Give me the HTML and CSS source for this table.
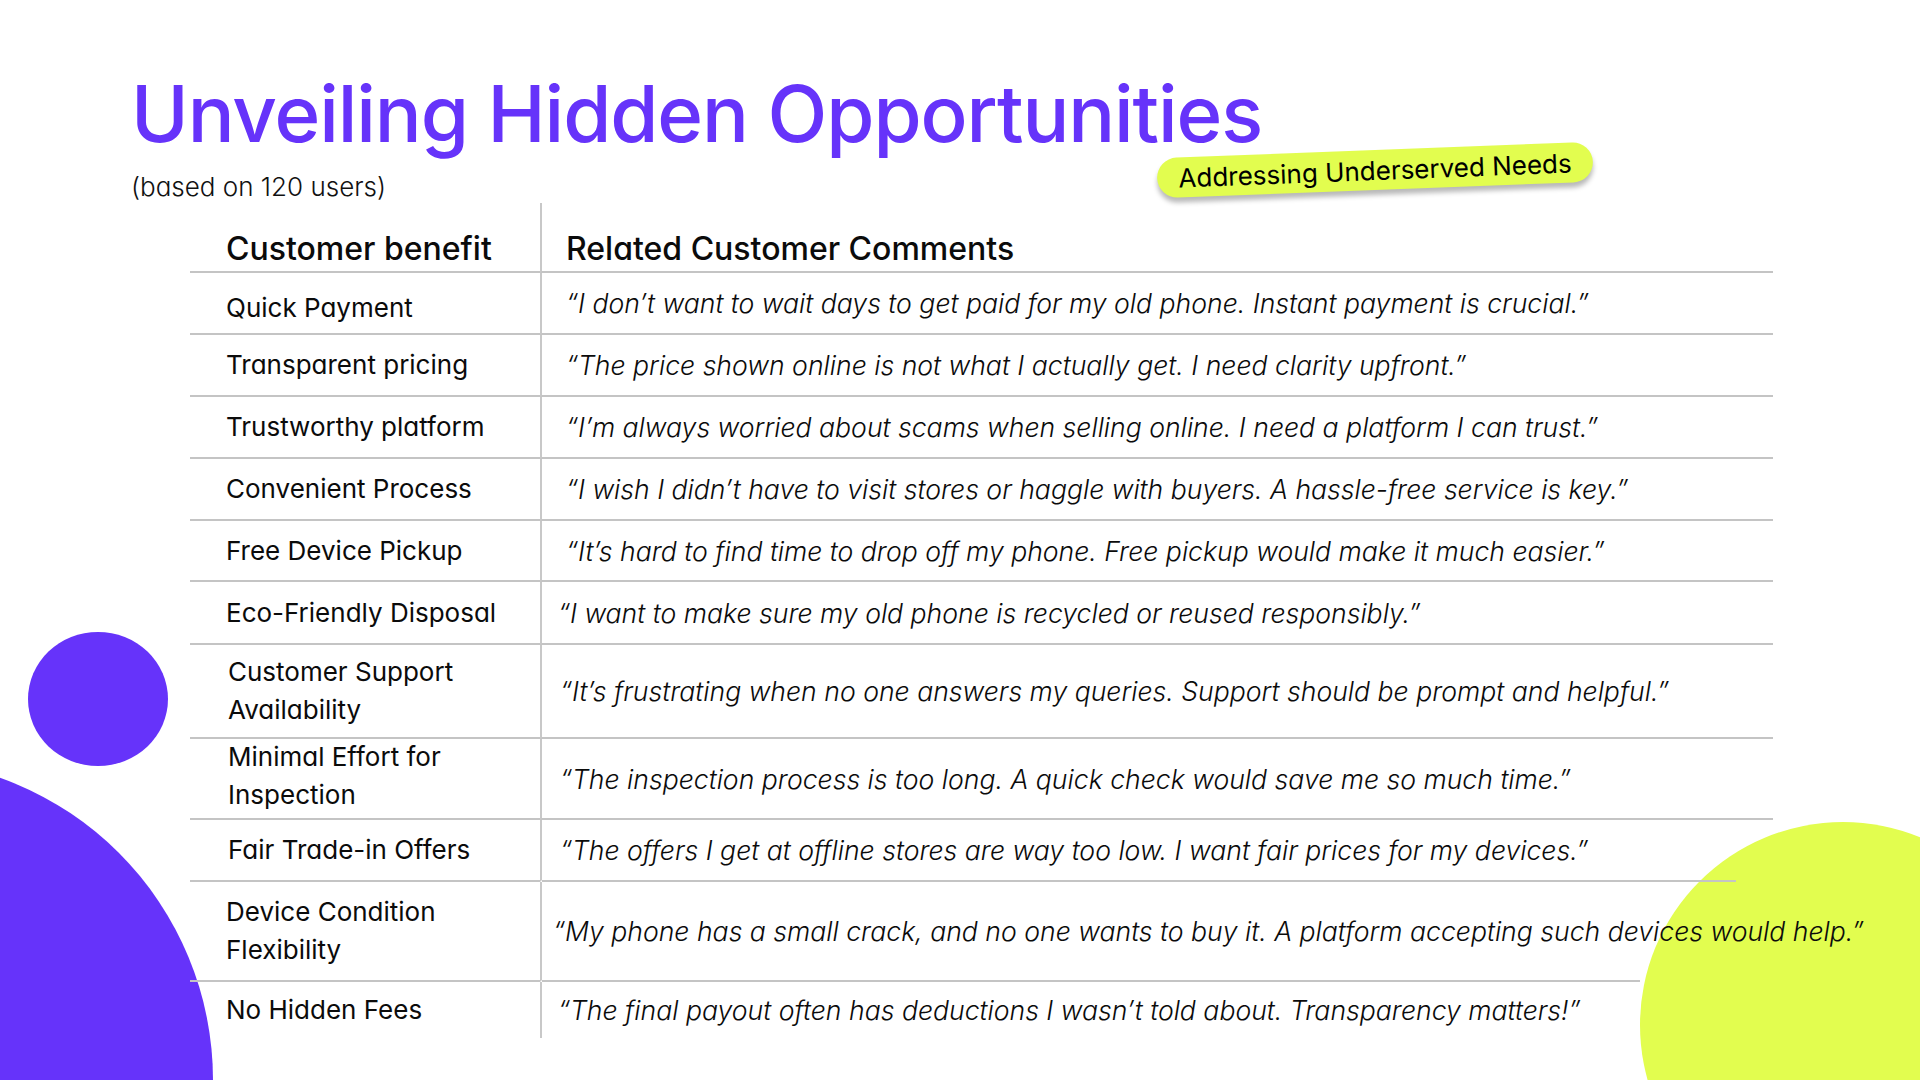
FILE: index.html
```html
<!DOCTYPE html>
<html lang="en">
<head>
<meta charset="utf-8">
<title>Unveiling Hidden Opportunities</title>
<link rel="stylesheet" href="styles.css">
</head>
<body>
<div class="slide">
  <div class="blob blob-small"></div>
  <div class="blob blob-big"></div>
  <div class="blob blob-lime"></div>

  <header class="intro">
    <h1 class="title">Unveiling Hidden Opportunities</h1>
    <p class="subtitle">(based on 120 users)</p>
  </header>

  <div class="badge">Addressing Underserved Needs</div>

  <div class="table">
    <div class="cell c1 head">Customer benefit</div>
    <div class="cell c2 head">Related Customer Comments</div>

    <div class="cell c1 nudge">Quick Payment</div>
    <div class="cell c2">“I don’t want to wait days to get paid for my old phone. Instant payment is crucial.”</div>

    <div class="cell c1">Transparent pricing</div>
    <div class="cell c2">“The price shown online is not what I actually get. I need clarity upfront.”</div>

    <div class="cell c1">Trustworthy platform</div>
    <div class="cell c2">“I’m always worried about scams when selling online. I need a platform I can trust.”</div>

    <div class="cell c1">Convenient Process</div>
    <div class="cell c2">“I wish I didn’t have to visit stores or haggle with buyers. A hassle-free service is key.”</div>

    <div class="cell c1">Free Device Pickup</div>
    <div class="cell c2">“It’s hard to find time to drop off my phone. Free pickup would make it much easier.”</div>

    <div class="cell c1">Eco-Friendly Disposal</div>
    <div class="cell c2 in-8">“I want to make sure my old phone is recycled or reused responsibly.”</div>

    <div class="cell c1 in-2">Customer Support<br>Availability</div>
    <div class="cell c2 in-6">“It’s frustrating when no one answers my queries. Support should be prompt and helpful.”</div>

    <div class="cell c1 in-2 lift">Minimal Effort for<br>Inspection</div>
    <div class="cell c2 in-6">“The inspection process is too long. A quick check would save me so much time.”</div>

    <div class="cell c1 in-2">Fair Trade-in Offers</div>
    <div class="cell c2 in-6 short">“The offers I get at offline stores are way too low. I want fair prices for my devices.”</div>

    <div class="cell c1">Device Condition<br>Flexibility</div>
    <div class="cell c2 in-13 shorter">“My phone has a small crack, and no one wants to buy it. A platform accepting such devices would help.”</div>

    <div class="cell c1 last">No Hidden Fees</div>
    <div class="cell c2 in-8 last">“The final payout often has deductions I wasn’t told about. Transparency matters!”</div>
  </div>
</div>
</body>
</html>
```

FILE: styles.css
```css
* { box-sizing: border-box; }

html, body {
  margin: 0;
  padding: 0;
  background: #ffffff;
}

body {
  font-family: "Inter", "Noto Sans", "Liberation Sans", sans-serif;
  font-feature-settings: "cv11";
  color: #0b0b0b;
}

.slide {
  position: relative;
  width: 1920px;
  height: 1080px;
  overflow: hidden;
  background: #ffffff;
}

/* decorative shapes */
.blob {
  position: absolute;
  border-radius: 50%;
}
.blob-small {
  left: 28px;
  top: 632px;
  width: 140px;
  height: 134px;
  background: #6633fa;
}
.blob-big {
  left: -429px;
  top: 759px;
  width: 642px;
  height: 642px;
  background: #6633fa;
}
.blob-lime {
  left: 1640px;
  top: 822px;
  width: 406px;
  height: 406px;
  background: #e2fd4f;
  z-index: 0;
}

/* heading */
.intro {
  position: relative;
  z-index: 1;
  padding: 75px 0 0 131px;
}
.title {
  margin: 0;
  font-size: 78px;
  line-height: 78px;
  font-weight: 500;
  letter-spacing: -1.1px;
  color: #6633fa;
  white-space: nowrap;
}
.subtitle {
  margin: 21px 0 0 0;
  font-size: 26px;
  line-height: 26px;
  font-weight: 300;
  color: #111;
}

/* badge */
.badge {
  position: absolute;
  z-index: 2;
  left: 1157px;
  top: 150px;
  width: 436px;
  height: 40px;
  border-radius: 20px;
  background: #e2fd4f;
  box-shadow: 0 5px 5px rgba(0, 0, 0, 0.28);
  transform: rotate(-2.2deg);
  display: flex;
  align-items: center;
  justify-content: center;
  font-size: 26px;
  font-weight: 400;
  color: #000;
  white-space: nowrap;
}

/* table */
.table {
  position: relative;
  z-index: 1;
  margin: 3px 0 0 190px;
  width: 1583px;
  display: grid;
  grid-template-columns: 350px 1233px;
  grid-template-rows: 70px 62px 62px 62px 62px 61px 63px 94px 81px 62px 100px 56px;
}

.cell {
  display: flex;
  align-items: center;
  border-bottom: 2px solid #c4c4c4;
  font-size: 26px;
  line-height: 38px;
  white-space: nowrap;
}
.cell.last {
  border-bottom: none;
}

.c1 {
  padding-left: 36px;
  font-weight: 400;
}
.c2 {
  border-left: 2px solid #c8c8c8;
  padding-left: 24px;
  font-style: italic;
  font-weight: 300;
  font-size: 26.6px;
}

.head {
  align-items: flex-end;
  padding-bottom: 3px;
  font-size: 32px;
  font-weight: 500;
  font-style: normal;
}
.c2.head { font-size: 32px; }

.nudge { padding-top: 10px; }
.lift { padding-bottom: 6px; }
.in-2 { padding-left: 38px; }
.in-6 { padding-left: 18px; }
.in-8 { padding-left: 16px; }
.in-13 { padding-left: 11px; }

.c2.short,
.c2.shorter {
  border-bottom-color: transparent;
  background-image: linear-gradient(#c4c4c4, #c4c4c4);
  background-repeat: no-repeat;
  background-position: left bottom;
  background-origin: border-box;
}
.c2.short { background-size: 1196px 2px; }
.c2.shorter { background-size: 1100px 2px; }
```
